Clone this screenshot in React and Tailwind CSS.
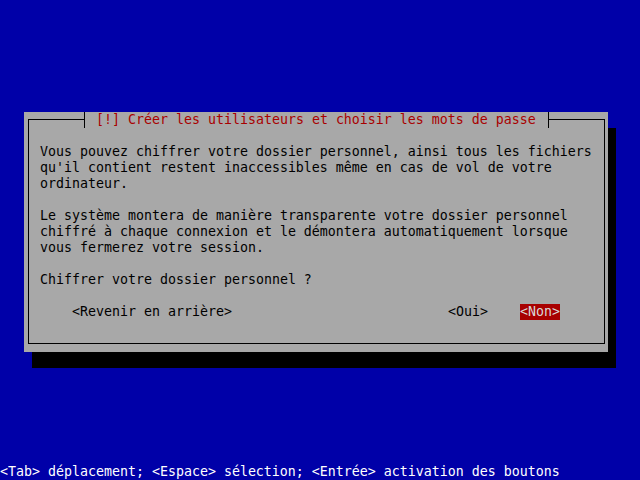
import React from 'react'

const body = [
  'Vous pouvez chiffrer votre dossier personnel, ainsi tous les fichiers',
  "qu'il contient restent inaccessibles même en cas de vol de votre",
  'ordinateur.',
  '',
  'Le système montera de manière transparente votre dossier personnel',
  'chiffré à chaque connexion et le démontera automatiquement lorsque',
  'vous fermerez votre session.',
  '',
  'Chiffrer votre dossier personnel ?',
  '',
]

const mono = { fontFamily: '"DejaVu Sans Mono", "Liberation Mono", monospace' }

export default function App() {
  return (
    <div
      className="w-[640px] h-[480px] bg-[#0000a8] flex flex-col text-[13.29px] leading-4 text-black overflow-hidden"
      style={mono}
    >
      {/* Dialog */}
      <div className="mt-[112px] ml-[24px] w-[584px] h-[240px] bg-[#a8a8a8] shadow-[8px_16px_0_0_#000] relative flex">
        {/* Title */}
        <div className="absolute left-[60px] top-0 h-4 flex items-center z-10 bg-[#a8a8a8] border-x border-black pl-[3px] pr-[4px]">
          <span className="whitespace-pre text-[#a80000]"> [!] Créer les utilisateurs et choisir les mots de passe </span>
        </div>

        {/* Frame */}
        <div className="flex-1 mt-[7px] ml-[4px] mr-[3px] mb-[8px] border border-black pl-[11px] pt-[24px] flex flex-col">
          {body.map((line, i) => (
            <div key={i} className="h-4 whitespace-pre">{line}</div>
          ))}
          <div className="h-4 flex whitespace-pre">
            <span className="ml-[32px]">&lt;Revenir en arrière&gt;</span>
            <span className="ml-[216px]">&lt;Oui&gt;</span>
            <span className="ml-[32px] bg-[#a80000] text-[#d8d8d8]">&lt;Non&gt;</span>
          </div>
        </div>
      </div>

      {/* Status line */}
      <div className="mt-auto h-4 whitespace-pre text-white">
        &lt;Tab&gt; déplacement; &lt;Espace&gt; sélection; &lt;Entrée&gt; activation des boutons
      </div>
    </div>
  )
}
